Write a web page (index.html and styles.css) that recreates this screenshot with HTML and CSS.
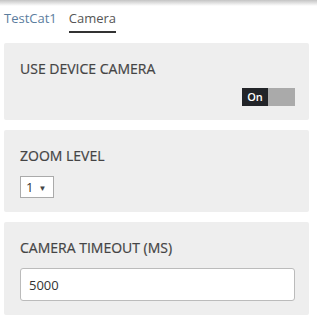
FILE: index.html
```html
<!DOCTYPE html>
<html lang="en">
<head>
  <meta charset="UTF-8">
  <meta name="viewport" content="width=device-width, initial-scale=1.0">
  <title>Camera settings</title>
  <link rel="stylesheet" href="styles.css">
</head>
<body>
  <div id="page">
    <div class="tabs">
      <div class="tab">TestCat1</div>
      <div class="tab active">Camera</div>
    </div>

    <div class="card">
      <div class="label">USE DEVICE CAMERA</div>
      <div class="toggle-row">
        <div class="toggle">
          <span class="toggle-on">On</span>
          <span class="toggle-off"></span>
        </div>
      </div>
    </div>

    <div class="card">
      <div class="label">ZOOM LEVEL</div>
      <div class="select">
        <span>1</span>
        <span class="arrow">&#9660;</span>
      </div>
    </div>

    <div class="card">
      <div class="label">CAMERA TIMEOUT (MS)</div>
      <input class="textbox" type="text" value="5000">
    </div>
  </div>
</body>
</html>
```

FILE: styles.css
```css
body {
  margin: 0;
  font-family: 'Open Sans', 'Noto Sans', sans-serif;
  background: #fff;
}
#page {
  background: linear-gradient(#c4c4c4, #fff 6px) no-repeat;
  min-height: 325px;
  overflow: hidden;
}
.tabs {
  display: flex;
  gap: 12px;
  padding-left: 4px;
}
.tab {
  font-size: 13px;
  line-height: 18px;
  padding: 9px 0 4px;
  border-bottom: 2px solid transparent;
  color: #5b7d9e;
}
.tab.active {
  color: #555;
  border-bottom-color: #333;
}
.card {
  background: #eeeeee;
  margin: 10px 8px 10px 4px;
  padding: 17px 14px 14px 16px;
  border-radius: 2px;
}
.label {
  font-size: 14px;
  line-height: 18px;
  color: #444;
  -webkit-text-stroke: 0.2px #444;
}
.toggle-row {
  display: flex;
  justify-content: flex-end;
  margin-top: 10px;
}
.toggle {
  display: flex;
  height: 18px;
}
.toggle-on {
  width: 26px;
  background: #222428;
  color: #fff;
  font-size: 11px;
  font-weight: 600;
  line-height: 18px;
  text-align: center;
}
.toggle-off {
  width: 27px;
  background: #aaaaaa;
}
.select {
  margin-top: 11px;
  width: 27px;
  height: 20px;
  border: 1px solid #aaa;
  background: #fff;
  display: flex;
  align-items: center;
  gap: 5px;
  padding-left: 5px;
  font-size: 13px;
  color: #333;
}
.select .arrow {
  font-size: 8px;
  color: #444;
}
.textbox {
  display: block;
  margin-top: 11px;
  width: 100%;
  height: 33px;
  box-sizing: border-box;
  border: 1px solid #bbb;
  border-radius: 3px;
  padding: 0 8px;
  font-family: 'Open Sans', 'Noto Sans', sans-serif;
  font-size: 13px;
  color: #333;
}
```
